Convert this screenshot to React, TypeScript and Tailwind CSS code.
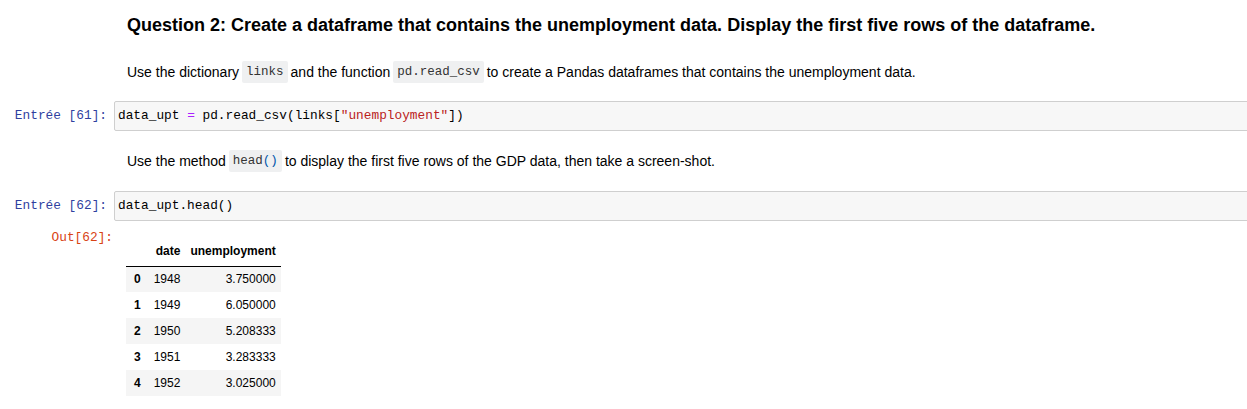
const sans = 'font-["Liberation_Sans",Arial,sans-serif]';
const mono = 'font-["Liberation_Mono","DejaVu_Sans_Mono",monospace]';

const InlineCode = ({ children }: { children: React.ReactNode }) => (
  <code className={`${mono} text-[12.5px] bg-[#eff0f1] rounded-[2px] px-[4px] py-[2px] mx-[3px] text-[#333]`}>
    {children}
  </code>
);

const Prompt = ({ label, out }: { label: string; out?: boolean }) => (
  <div
    className={`${mono} w-[114px] shrink-0 text-right text-[12.8px] ${
      out ? 'text-[#d84315] pr-[1px]' : 'text-[#303f9f] pr-[7px]'
    }`}
  >
    {label}
  </div>
);

const rows = [
  ['0', '1948', '3.750000'],
  ['1', '1949', '6.050000'],
  ['2', '1950', '5.208333'],
  ['3', '1951', '3.283333'],
  ['4', '1952', '3.025000'],
];

export default function App() {
  return (
    <div className={`${sans} w-[1247px] h-[409px] bg-white text-black overflow-hidden`}>
      {/* heading */}
      <div className="h-[50px] pl-[127px] flex items-center">
        <h3 className="text-[18px] font-bold text-black whitespace-nowrap">
          Question 2: Create a dataframe that contains the unemployment data. Display the first five rows of the dataframe.
        </h3>
      </div>

      <div className="h-[44px] pl-[127px] flex items-center text-[14px] text-black whitespace-nowrap">
        Use the dictionary <InlineCode>links</InlineCode> and the function <InlineCode>pd.read_csv</InlineCode> to create a Pandas dataframes that contains the unemployment data.
      </div>

      {/* code cell 61 */}
      <div className="flex items-center h-[30px] mt-[7px]">
        <Prompt label="Entrée [61]:" />
        <div className={`${mono} w-[1140px] h-[30px] shrink-0 bg-[#f7f7f7] border border-[#cfcfcf] rounded-[2px] flex items-center pl-[3px] text-[12.8px] text-black whitespace-pre`}>
          {'data_upt '}
          <span className="text-[#aa22ff]">=</span>
          {' pd.read_csv(links['}
          <span className="text-[#ba2121]">"unemployment"</span>
          {'])'}
        </div>
      </div>

      <div className="h-[60px] pl-[127px] flex items-center text-[14px] text-black whitespace-nowrap">
        Use the method <InlineCode>
          head<span className="text-[#0055aa]">()</span>
        </InlineCode> to display the first five rows of the GDP data, then take a screen-shot.
      </div>

      {/* code cell 62 */}
      <div className="flex items-center h-[30px]">
        <Prompt label="Entrée [62]:" />
        <div className={`${mono} w-[1140px] h-[30px] shrink-0 bg-[#f7f7f7] border border-[#cfcfcf] rounded-[2px] flex items-center pl-[3px] text-[12.8px] text-black whitespace-pre`}>
          data_upt.head()
        </div>
      </div>

      {/* output */}
      <div className="flex items-start mt-[7px]">
        <Prompt label="Out[62]:" out />
        <div className="pl-[12px] pt-[9px]">
          <table className="text-[12px] text-black border-collapse">
            <thead>
              <tr className="border-b border-black h-[29px]">
                <th></th>
                <th className="text-right font-bold px-[5px]">date</th>
                <th className="text-right font-bold px-[5px]">unemployment</th>
              </tr>
            </thead>
            <tbody>
              {rows.map((r, i) => (
                <tr key={r[0]} className={`h-[26px] ${i % 2 === 0 ? 'bg-[#f5f5f5]' : 'bg-white'}`}>
                  <th className="font-bold text-left pl-[8px] pr-[8px]">{r[0]}</th>
                  <td className="text-left px-[5px]">{r[1]}</td>
                  <td className="text-right px-[5px]">{r[2]}</td>
                </tr>
              ))}
            </tbody>
          </table>
        </div>
      </div>
    </div>
  );
}
